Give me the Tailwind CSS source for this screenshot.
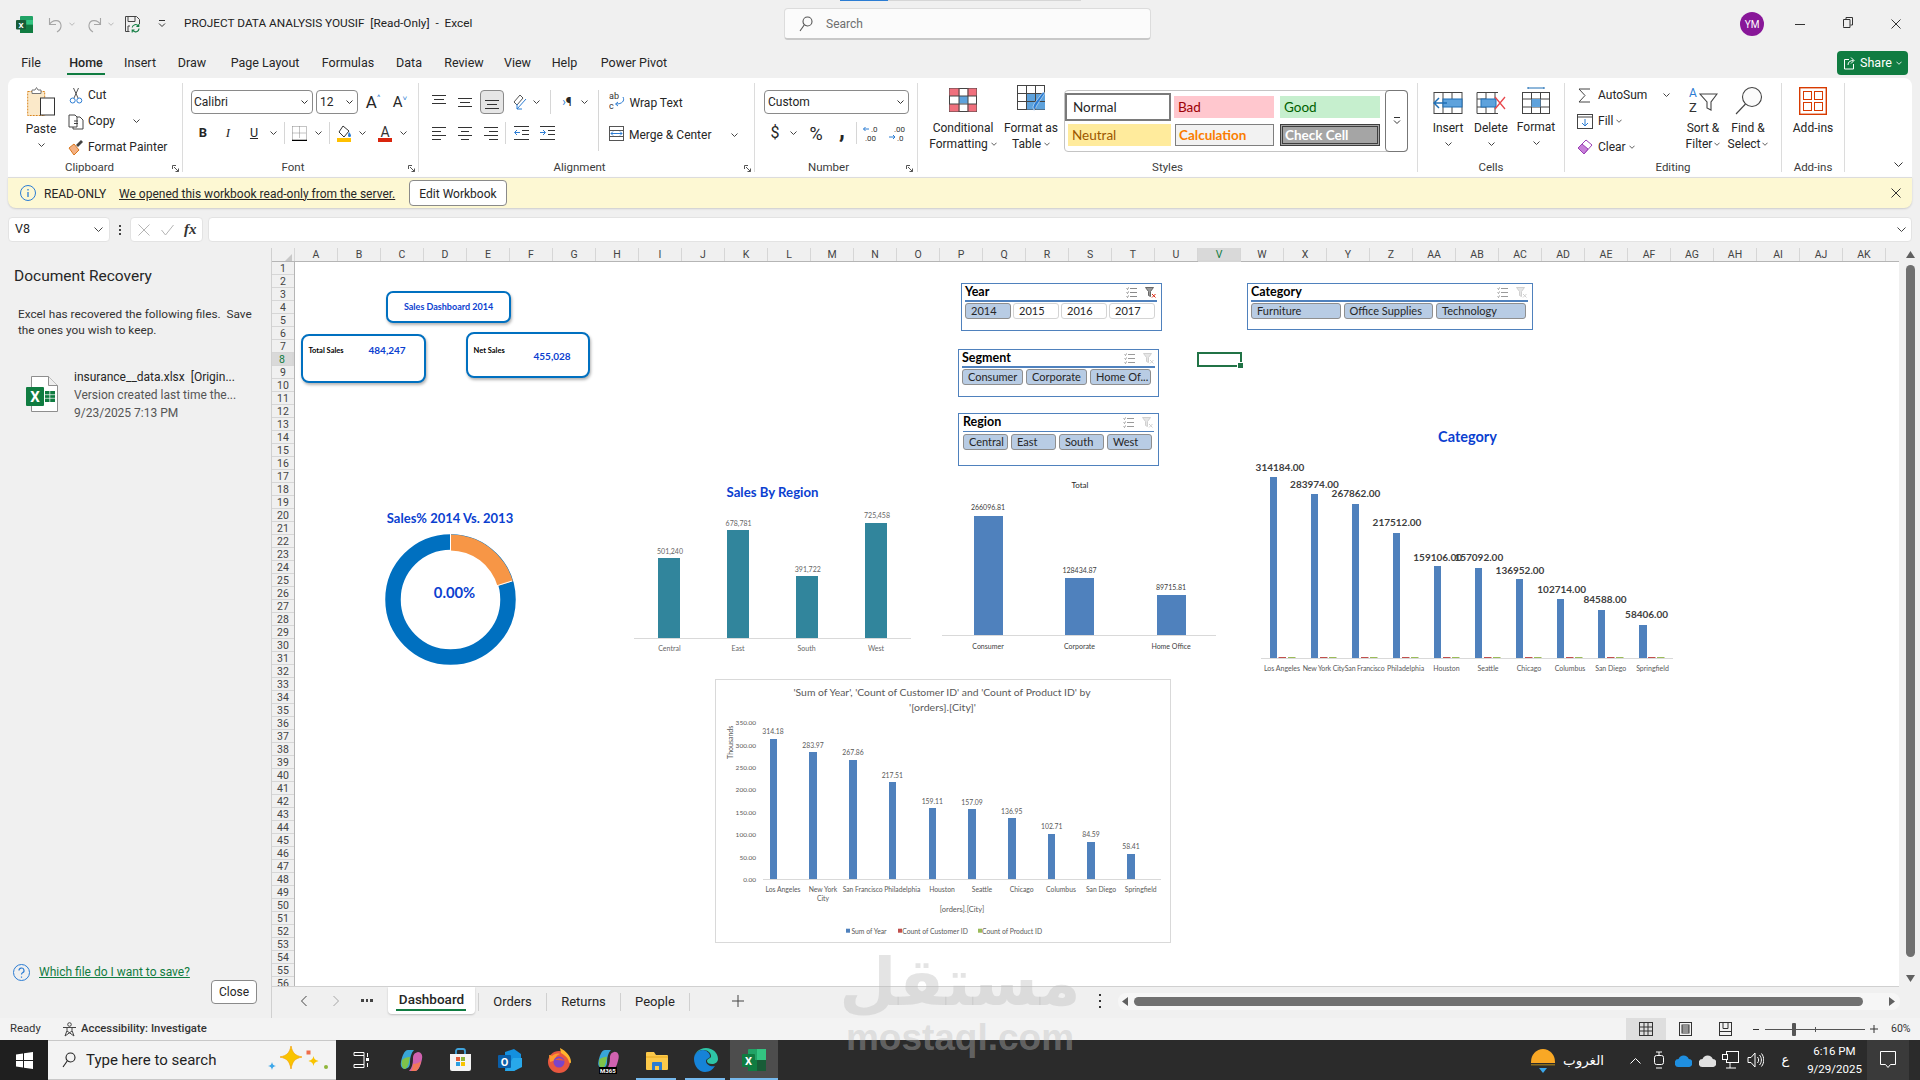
<!DOCTYPE html>
<html lang="en">
<head>
<meta charset="utf-8">
<title>PROJECT DATA ANALYSIS YOUSIF</title>
<script src="https://cdn.jsdelivr.net/npm/@tailwindcss/browser@4"></script>
</head>
<body class="bg-[#f0f0f0] overflow-hidden">
<div class="relative w-[1920px] h-[1080px] overflow-hidden flex flex-col bg-[#f0f0f0] font-['Roboto',sans-serif] text-[12px] text-[#262626]">

<!-- title bar -->
<div class="h-[51px] flex items-start pt-[8px] shrink-0">
  <div class="h-[32px] flex items-center pl-[16px]">
    <svg class="w-[17px] h-[17px]" viewBox="0 0 17 17"><rect x="4" width="13" height="17" rx="1" fill="#21a366"/><rect x="4" y="8.5" width="13" height="8.5" fill="#107c41"/><rect x="10.5" y="4" width="6.5" height="4.5" fill="#33c481"/><rect y="4" width="10" height="9.5" rx="1" fill="#185c37"/><text x="5" y="11.6" text-anchor="middle" font-size="8" font-weight="700" fill="#fff">X</text></svg>
    <svg class="w-[16px] h-[17px] ml-[14px]" viewBox="0 0 16 17" fill="none" stroke="#a6a6a6" stroke-width="1.1"><path d="M2.5 2v6.5H9M2.5 8.500C5 4 13 2.500 14 9c.4 3-1.500 5.500-4 7"/></svg>
    <svg class="w-[6px] h-[4px] ml-[6px]" viewBox="0 0 7 4" fill="none" stroke="#b0b0b0"><path d="M.5.500l3 3 3-3"/></svg>
    <svg class="w-[16px] h-[17px] ml-[12px]" viewBox="0 0 16 17" fill="none" stroke="#a6a6a6" stroke-width="1.1"><path d="M13.500 2v6.500H7M13.500 8.500C11 4 3 2.500 2 9c-.4 3 1.500 5.500 4 7"/></svg>
    <svg class="w-[6px] h-[4px] ml-[5px]" viewBox="0 0 7 4" fill="none" stroke="#b0b0b0"><path d="M.5.500l3 3 3-3"/></svg>
    <svg class="w-[16px] h-[17px] ml-[11px]" viewBox="0 0 16 17" fill="none"><path d="M.5.500h11l3 3V8M.5.500v15h4M3 .500v5h7v-5M3 15v-5h2" stroke="#444"/><path d="M14 12.500a3.500 3.500 0 0 1-6.400 1.800M7.200 11.500a3.500 3.500 0 0 1 6.200-1.600M13.800 8v2.400h-2.400M7.200 16.400v-2.400h2.400" stroke="#107c41" stroke-width="1.1"/></svg>
    <svg class="w-[10px] h-[8px] ml-[16px]" viewBox="0 0 10 8" fill="none" stroke="#333"><path d="M2 .500h6M2 3.500l3 3 3-3"/></svg>
  </div>
  <div class="h-[32px] flex items-center ml-[17px] w-[288px] whitespace-nowrap text-[#222] text-[11.8px]">PROJECT DATA ANALYSIS YOUSIF&nbsp; [Read-Only]&nbsp; -&nbsp; Excel</div>
  <div class="ml-[312px] w-[367px] h-[32px] bg-[#fbfbfb] border border-[#dcdcdc] border-b-[2px] border-b-[#c8c8c8] rounded-[4px] flex items-center pl-[14px] text-[#6e6e6e]">
    <svg class="w-[14px] h-[16px]" viewBox="0 0 14 16" fill="none" stroke="#555" stroke-width="1.1"><circle cx="8.500" cy="5.500" r="4.500"/><path d="M5.200 9L1 15"/></svg>
    <span class="ml-[13px]">Search</span>
  </div>
  <div class="ml-[589px] w-[24px] h-[32px] flex items-center justify-center"><span class="w-[24px] h-[24px] rounded-full bg-[#881798] text-white text-[10px] flex items-center justify-center">YM</span></div>
  <div class="ml-[31px] w-[10px] h-[32px] flex items-center"><span class="w-[10px] h-px bg-[#333]"></span></div>
  <svg class="ml-[38px] w-[10px] h-[32px]" viewBox="0 0 10 32" fill="none" stroke="#333"><path d="M.5 18.500v-7h6.500v8h-6.500zM3 11.500v-2h6.500v7.500H7.500"/></svg>
  <svg class="ml-[38px] w-[10px] h-[32px]" viewBox="0 0 10 32" fill="none" stroke="#333"><path d="M.5 11.500l9 9M9.500 11.500l-9 9"/></svg>
</div>

<!-- tabs -->
<div class="h-[27px] flex pl-[8px] shrink-0 text-[12.500px]">
  <div class="w-[46px] h-[25px] flex items-center justify-center">File</div>
  <div class="w-[64px] h-[25px] flex items-center justify-center relative font-medium">Home<span class="absolute left-[13px] right-[13px] bottom-[1px] h-[2.500px] bg-[#107c41]"></span></div>
  <div class="w-[44px] h-[25px] flex items-center justify-center">Insert</div>
  <div class="w-[60px] h-[25px] flex items-center justify-center">Draw</div>
  <div class="w-[86px] h-[25px] flex items-center justify-center">Page Layout</div>
  <div class="w-[80px] h-[25px] flex items-center justify-center">Formulas</div>
  <div class="w-[42px] h-[25px] flex items-center justify-center">Data</div>
  <div class="w-[68px] h-[25px] flex items-center justify-center">Review</div>
  <div class="w-[39px] h-[25px] flex items-center justify-center">View</div>
  <div class="w-[55px] h-[25px] flex items-center justify-center">Help</div>
  <div class="w-[84px] h-[25px] flex items-center justify-center">Power Pivot</div>
  <div class="ml-[1161px] w-[71px] h-[24px] bg-[#107c41] rounded-[4px] flex items-center justify-center gap-[4px] text-white text-[12.500px]">
    <svg class="w-[13px] h-[14px]" viewBox="0 0 13 14" fill="none" stroke="#fff"><path d="M6 3.500H1.500v9.500h9V8M5 9c0-3 2-4.500 5.500-4.500M8 1.500l3 3-3 3"/></svg>Share
    <svg class="w-[6px] h-[4px]" viewBox="0 0 7 4" fill="none" stroke="#fff"><path d="M.5.500l3 3 3-3"/></svg>
  </div>
</div>

<!-- ribbon -->
<div class="mx-[8px] h-[99px] bg-white rounded-t-[8px] flex shrink-0">
  <!-- Clipboard -->
  <div class="w-[174px] flex flex-col">
    <div class="h-[82px] flex">
      <div class="w-[60px] pl-[6px] flex flex-col items-center">
        <div class="h-[38px] flex items-end">
          <svg class="w-[28px] h-[29px]" viewBox="0 0 28 29" fill="none"><rect x=".7" y="4.500" width="17" height="24" fill="#fbe9c9" stroke="#d9861f" stroke-dasharray="2 1"/><path d="M5 4.500V3h3l1.500-2.500L11 3h3v3.500H5z" fill="#fff" stroke="#777"/><rect x="13.500" y="11" width="14" height="17" fill="#fff" stroke="#333"/></svg>
        </div>
        <div class="pt-[5px] leading-[16px]">Paste</div>
        <div class="h-[16px] flex items-center"><svg class="w-[7px] h-[4px]" viewBox="0 0 7 4" fill="none" stroke="#444"><path d="M.5.500l3 3 3-3"/></svg></div>
      </div>
      <div class="pt-[4px] flex flex-col">
        <div class="h-[26px] flex items-center"><svg class="w-[16px] h-[17px]" viewBox="0 0 16 17" fill="none" stroke="#555"><path d="M5.500 1l4.500 10M10.500 1L6 11"/><circle cx="4.700" cy="13.500" r="2.500" stroke="#2b7cd3"/><circle cx="11.300" cy="13.500" r="2.500" stroke="#2b7cd3"/></svg><span class="ml-[4px]">Cut</span></div>
        <div class="h-[26px] flex items-center"><svg class="w-[16px] h-[17px]" viewBox="0 0 16 17" fill="none" stroke="#444"><path d="M1 2h6l2 2v10H1zM5 14v2h10V7l-3-3H9M6 8h4M6 10.500h4"/></svg><span class="ml-[4px]">Copy</span><svg class="w-[7px] h-[4px] ml-[18px]" viewBox="0 0 7 4" fill="none" stroke="#444"><path d="M.5.500l3 3 3-3"/></svg></div>
        <div class="h-[26px] flex items-center"><svg class="w-[16px] h-[17px]" viewBox="0 0 16 17"><path d="M1 9l5-4 5 6-5 5z" fill="#f4b183" stroke="#d9771e"/><path d="M8 6l5-5 2 2-5 5z" fill="#444"/></svg><span class="ml-[4px] whitespace-nowrap">Format Painter</span></div>
      </div>
    </div>
    <div class="h-[16px] flex items-center relative text-[11.500px] text-[#3c3c3c]"><span class="w-[163px] text-center">Clipboard</span><svg class="w-[7px] h-[7px] ml-[1px]" viewBox="0 0 7 7" fill="none" stroke="#555"><path d="M.5 4V.5H4M2 2l4.500 4.500M6.500 3.500v3h-3"/></svg></div>
  </div>
  <div class="w-px bg-[#dcdcdc] my-[5px]"></div>

  <!-- Font -->
  <div class="w-[235px] flex flex-col">
    <div class="h-[82px] pt-[12px] flex flex-col">
      <div class="h-[24px] flex items-center">
        <div class="ml-[8px] w-[122px] h-[24px] border border-[#8a8a8a] rounded-[4px] flex items-center justify-between pl-[2px] pr-[4px]">Calibri<svg class="w-[7px] h-[4px]" viewBox="0 0 7 4" fill="none" stroke="#333"><path d="M.5.500l3 3 3-3"/></svg></div>
        <div class="ml-[3px] w-[42px] h-[24px] border border-[#8a8a8a] rounded-[4px] flex items-center justify-between pl-[3px] pr-[4px]">12<svg class="w-[7px] h-[4px]" viewBox="0 0 7 4" fill="none" stroke="#333"><path d="M.5.500l3 3 3-3"/></svg></div>
        <div class="ml-[5px] w-[20px] text-[17px] leading-[17px] flex justify-center"><span>A</span><span class="text-[8px] text-[#2b7cd3] leading-[8px]">^</span></div>
        <div class="ml-[7px] w-[20px] text-[15px] leading-[15px] flex justify-center"><span>A</span><span class="text-[8px] text-[#2b7cd3] leading-[8px]">˅</span></div>
      </div>
      <div class="mt-[8px] h-[22px] flex items-center">
        <span class="ml-[14px] w-[12px] text-center font-bold text-[13px]">B</span>
        <span class="ml-[15px] w-[8px] text-center italic text-[13px] font-['Liberation_Serif',serif]">I</span>
        <span class="ml-[17px] w-[10px] text-center underline text-[12.500px]">U</span>
        <svg class="ml-[10.500px] w-[7px] h-[4px]" viewBox="0 0 7 4" fill="none" stroke="#444"><path d="M.5.500l3 3 3-3"/></svg>
        <span class="ml-[7.500px] w-px h-[22px] bg-[#d6d6d6]"></span>
        <svg class="ml-[6.500px] w-[15px] h-[15px]" viewBox="0 0 15 15" fill="none"><path d="M.5.500h14v14M.5.500v14M7.500.500v12M.5 7h14" stroke="#888" stroke-dasharray="1 1"/><path d="M0 14.500h15" stroke="#000" stroke-width="1.500"/></svg>
        <svg class="ml-[8px] w-[7px] h-[4px]" viewBox="0 0 7 4" fill="none" stroke="#444"><path d="M.5.500l3 3 3-3"/></svg>
        <span class="ml-[7.500px] w-px h-[22px] bg-[#d6d6d6]"></span>
        <svg class="ml-[6px] w-[16px] h-[17px]" viewBox="0 0 16 17"><path d="M7 1l6 5-5 6-5-5z" fill="none" stroke="#333"/><path d="M13 7c1.500 2 2 3 2 3.500a1.500 1.500 0 0 1-3 0c0-.5.300-1.500 1-3.500z" fill="#2b7cd3"/><rect x="1" y="13" width="14" height="4" fill="#ffc000"/></svg>
        <svg class="ml-[6.500px] w-[7px] h-[4px]" viewBox="0 0 7 4" fill="none" stroke="#444"><path d="M.5.500l3 3 3-3"/></svg>
        <svg class="ml-[12.500px] w-[14px] h-[17px]" viewBox="0 0 14 17"><text x="7" y="11.500" text-anchor="middle" font-size="14" fill="#333">A</text><rect x="0" y="13" width="14" height="4" fill="#d9250d"/></svg>
        <svg class="ml-[7.500px] w-[7px] h-[4px]" viewBox="0 0 7 4" fill="none" stroke="#444"><path d="M.5.500l3 3 3-3"/></svg>
      </div>
    </div>
    <div class="h-[16px] flex items-center text-[11.500px] text-[#3c3c3c]"><span class="w-[220px] text-center">Font</span><svg class="w-[7px] h-[7px] ml-[5px]" viewBox="0 0 7 7" fill="none" stroke="#555"><path d="M.5 4V.5H4M2 2l4.500 4.500M6.500 3.500v3h-3"/></svg></div>
  </div>
  <div class="w-px bg-[#dcdcdc] my-[5px]"></div>

  <!-- Alignment -->
  <div class="w-[335px] flex flex-col">
    <div class="h-[82px] pt-[12px] flex">
      <div class="w-[179px] flex flex-col">
        <div class="h-[24px] flex items-center">
          <svg class="ml-[13px] w-[14px] h-[14px]" viewBox="0 0 14 14" stroke="#333"><path d="M0 .500h14M2 4.500h10M0 8.500h14"/></svg>
          <svg class="ml-[12px] w-[14px] h-[14px]" viewBox="0 0 14 14" stroke="#333"><path d="M0 3.500h14M2 7.500h10M0 11.500h14"/></svg>
          <div class="ml-[7.500px] w-[24px] h-[24px] bg-[#e6e6e6] border border-[#8a8a8a] rounded-[4px] flex items-center justify-center"><svg class="w-[14px] h-[14px]" viewBox="0 0 14 14" stroke="#333"><path d="M0 5.500h14M2 9.500h10M0 13.500h14"/></svg></div>
          <svg class="ml-[8.500px] w-[16px] h-[16px]" viewBox="0 0 16 16" fill="none"><path d="M2 8L8 1l3 3-6 7z" stroke="#555"/><path d="M14 5L5 15M5 15h5M5 15v-5" stroke="#2b7cd3"/></svg>
          <svg class="ml-[4.500px] w-[7px] h-[4px]" viewBox="0 0 7 4" fill="none" stroke="#444"><path d="M.5.500l3 3 3-3"/></svg>
          <span class="ml-[10.500px] w-px h-[24px] bg-[#d6d6d6]"></span>
          <span class="ml-[9px] w-[14px] text-center text-[12px]"><span class="text-[#2b7cd3]">›</span>¶</span>
          <svg class="ml-[7px] w-[7px] h-[4px]" viewBox="0 0 7 4" fill="none" stroke="#444"><path d="M.5.500l3 3 3-3"/></svg>
        </div>
        <div class="mt-[8px] h-[22px] flex items-center">
          <svg class="ml-[13px] w-[14px] h-[14px]" viewBox="0 0 14 14" stroke="#333"><path d="M0 1.500h14M0 5.500h9M0 9.500h14M0 13.500h9"/></svg>
          <svg class="ml-[12px] w-[14px] h-[14px]" viewBox="0 0 14 14" stroke="#333"><path d="M0 1.500h14M3 5.500h8M0 9.500h14M3 13.500h8"/></svg>
          <svg class="ml-[12px] w-[14px] h-[14px]" viewBox="0 0 14 14" stroke="#333"><path d="M0 1.500h14M5 5.500h9M0 9.500h14M5 13.500h9"/></svg>
          <span class="ml-[7px] w-px h-[22px] bg-[#d6d6d6]"></span>
          <svg class="ml-[7.500px] w-[15px] h-[14px]" viewBox="0 0 15 14" fill="none"><path d="M0 .500h15M8 4.500h7M8 8.500h7M0 13.500h15" stroke="#333"/><path d="M6 6.500H1M3 4L.5 6.500 3 9" stroke="#2b7cd3"/></svg>
          <svg class="ml-[11px] w-[15px] h-[14px]" viewBox="0 0 15 14" fill="none"><path d="M0 .500h15M8 4.500h7M8 8.500h7M0 13.500h15" stroke="#333"/><path d="M0 6.500h5M3 4l2.500 2.500L3 9" stroke="#2b7cd3"/></svg>
        </div>
      </div>
      <span class="w-px h-[61px] bg-[#d6d6d6]"></span>
      <div class="flex flex-col pl-[10px]">
        <div class="h-[24px] flex items-center"><svg class="w-[16px] h-[22px]" viewBox="0 0 16 22" fill="none"><text x="0" y="8" font-size="9" fill="#333">ab</text><text x="0" y="18" font-size="9" fill="#333">c</text><path d="M14 6c2 4-1 7-7 7M9 11l-2.500 2L9 15" stroke="#2b7cd3"/></svg><span class="ml-[4.500px] pt-[2px] whitespace-nowrap">Wrap Text</span></div>
        <div class="mt-[8px] h-[22px] flex items-center"><svg class="w-[15px] h-[15px]" viewBox="0 0 15 15" fill="none"><rect x=".5" y=".5" width="14" height="14" stroke="#555"/><path d="M.5 4.500h14M.5 10.500h14" stroke="#555"/><path d="M2 7.500h11M4 5.500l-2 2 2 2M11 5.500l2 2-2 2" stroke="#2b7cd3"/></svg><span class="ml-[5px] pt-[3px] whitespace-nowrap w-[90px]">Merge &amp; Center</span><svg class="ml-[12px] mt-[3px] w-[7px] h-[4px]" viewBox="0 0 7 4" fill="none" stroke="#444"><path d="M.5.500l3 3 3-3"/></svg></div>
      </div>
    </div>
    <div class="h-[16px] flex items-center text-[11.500px] text-[#3c3c3c]"><span class="w-[321px] text-center">Alignment</span><svg class="w-[7px] h-[7px] ml-[4px]" viewBox="0 0 7 7" fill="none" stroke="#555"><path d="M.5 4V.5H4M2 2l4.500 4.500M6.500 3.500v3h-3"/></svg></div>
  </div>
  <div class="w-px bg-[#dcdcdc] my-[5px]"></div>

  <!-- Number -->
  <div class="w-[162px] flex flex-col">
    <div class="h-[82px] pt-[12px] flex flex-col">
      <div class="ml-[9px] w-[145px] h-[24px] border border-[#8a8a8a] rounded-[4px] flex items-center justify-between pl-[3px] pr-[4px]">Custom<svg class="w-[7px] h-[4px]" viewBox="0 0 7 4" fill="none" stroke="#333"><path d="M.5.500l3 3 3-3"/></svg></div>
      <div class="mt-[8px] h-[22px] flex items-center">
        <span class="ml-[15px] w-[10px] text-center text-[16px]">$</span>
        <svg class="ml-[10px] w-[7px] h-[4px]" viewBox="0 0 7 4" fill="none" stroke="#444"><path d="M.5.500l3 3 3-3"/></svg>
        <span class="ml-[9px] w-[20px] text-center text-[18px]">%</span>
        <span class="ml-[13px] w-[6px] text-center text-[24px] font-bold leading-[12px] -mt-[6px]">,</span>
        <span class="ml-[11px] w-px h-[22px] bg-[#d6d6d6]"></span>
        <svg class="ml-[5px] w-[18px] h-[17px]" viewBox="0 0 18 17" fill="none"><path d="M7 4H1.500M3.500 2l-2 2 2 2" stroke="#2b7cd3"/><text x="9" y="7" font-size="8" fill="#333">.0</text><text x="3" y="15.500" font-size="8" fill="#333">.00</text></svg>
        <svg class="ml-[7.500px] w-[18px] h-[17px]" viewBox="0 0 18 17" fill="none"><text x="6" y="7" font-size="8" fill="#333">.00</text><path d="M1 12h6M5 10l2 2-2 2" stroke="#2b7cd3"/><text x="9" y="15.500" font-size="8" fill="#333">.0</text></svg>
      </div>
    </div>
    <div class="h-[16px] flex items-center text-[11.500px] text-[#3c3c3c]"><span class="w-[147px] text-center">Number</span><svg class="w-[7px] h-[7px] ml-[4px]" viewBox="0 0 7 7" fill="none" stroke="#555"><path d="M.5 4V.5H4M2 2l4.500 4.500M6.500 3.500v3h-3"/></svg></div>
  </div>
  <div class="w-px bg-[#dcdcdc] my-[5px]"></div>

  <!-- Styles -->
  <div class="w-[499px] flex flex-col">
    <div class="h-[82px] flex">
      <div class="w-[90px] flex flex-col items-center">
        <div class="h-[38px] flex items-end pb-[4px]"><svg class="w-[28px] h-[24px]" viewBox="0 0 28 24"><rect x=".5" y=".5" width="27" height="23" fill="#fff" stroke="#444"/><rect x=".5" y=".5" width="10" height="7.500" fill="#f0707d"/><rect x="10" y="8" width="9" height="7.500" fill="#5ea2dc"/><rect x=".5" y="16" width="10" height="7.500" fill="#f0707d"/><rect x="18.500" y="16" width="9" height="7.500" fill="#f0707d"/><rect x="18.500" y=".5" width="9" height="7.500" fill="#f0707d"/><path d="M10 0v24M19 0v24M0 8h28M0 16h28" stroke="#444"/></svg></div>
        <div class="pt-[4px] leading-[16px]">Conditional</div>
        <div class="leading-[16px] flex items-center gap-[3px]">Formatting<svg class="w-[6px] h-[4px]" viewBox="0 0 7 4" fill="none" stroke="#444"><path d="M.5.500l3 3 3-3"/></svg></div>
      </div>
      <div class="w-[46px] flex flex-col items-center">
        <div class="h-[38px] flex items-end pb-[4px]"><svg class="w-[29px] h-[27px]" viewBox="0 0 29 27"><rect x=".5" y=".5" width="27" height="24" fill="#fff" stroke="#444"/><rect x="10" y="8.500" width="18" height="16" fill="#5ea2dc"/><path d="M9.500 0v25M18.500 0v25M0 8.500h28M0 16.500h28" stroke="#444"/><path d="M28 8l-8 12-3 6-1-4 1-3 9-12z" fill="#2b7cd3" stroke="#fff" stroke-width=".5"/></svg></div>
        <div class="pt-[4px] leading-[16px] whitespace-nowrap">Format as</div>
        <div class="leading-[16px] flex items-center gap-[3px]">Table<svg class="w-[6px] h-[4px]" viewBox="0 0 7 4" fill="none" stroke="#444"><path d="M.5.500l3 3 3-3"/></svg></div>
      </div>
      <div class="ml-[10px] mt-[12px] w-[344px] h-[62px] border border-[#c4c4c4] rounded-[4px] flex text-[13.500px]">
        <div class="w-[320px] grid grid-cols-[106px_100px_103px] gap-x-[3px] grid-rows-[32px_24px]">
          <div class="self-center h-[28px] ml-0 border-[2px] border-[#7a7a7a] bg-white flex items-center pl-[6px] font-['Lato',sans-serif]">Normal</div>
          <div class="self-center h-[22px] bg-[#ffc7ce] text-[#9c0006] flex items-center pl-[4px] font-['Lato',sans-serif]">Bad</div>
          <div class="self-center h-[22px] ml-[3px] bg-[#c6efce] text-[#006100] flex items-center pl-[4px] font-['Lato',sans-serif]">Good</div>
          <div class="self-center h-[22px] ml-[3px] bg-[#ffeb9c] text-[#9c5700] flex items-center pl-[4px] font-['Lato',sans-serif]">Neutral</div>
          <div class="self-center h-[22px] ml-px bg-[#f2f2f2] border border-[#7f7f7f] text-[#fa7d00] font-bold flex items-center pl-[3px] font-['Lato',sans-serif]">Calculation</div>
          <div class="self-center h-[22px] ml-[3px] bg-[#a5a5a5] border-[3px] border-double border-[#3f3f3f] text-white font-bold flex items-center pl-[2px] font-['Lato',sans-serif]">Check Cell</div>
        </div>
        <div class="ml-auto w-[23px] border border-[#777] rounded-[4px] -my-px -mr-px flex items-center justify-center"><svg class="w-[8px] h-[8px]" viewBox="0 0 8 8" fill="none" stroke="#333"><path d="M1 .500h6M1 3.500l3 3 3-3"/></svg></div>
      </div>
    </div>
    <div class="h-[16px] flex items-center justify-center text-[11.500px] text-[#3c3c3c]"><span class="ml-[0px]">Styles</span></div>
  </div>
  <div class="w-px bg-[#dcdcdc] my-[5px]"></div>

  <!-- Cells -->
  <div class="w-[146px] flex flex-col">
    <div class="h-[82px] flex pl-[6px]">
      <div class="w-[48px] flex flex-col items-center">
        <div class="h-[36px] flex items-end"><svg class="w-[30px] h-[22px]" viewBox="0 0 30 22" fill="none"><rect x="1" y=".5" width="28" height="21" fill="#fff" stroke="#444"/><path d="M10 0v22M19 0v22" stroke="#444"/><rect x="10" y="7" width="19" height="8" fill="#5ea2dc" stroke="#1f6fb5"/><path d="M14 11H1M6 6l-5 5 5 5" stroke="#1f6fb5" stroke-width="1.500"/></svg></div>
        <div class="pt-[6px] leading-[16px]">Insert</div>
        <div class="h-[16px] flex items-center"><svg class="w-[7px] h-[4px]" viewBox="0 0 7 4" fill="none" stroke="#444"><path d="M.5.500l3 3 3-3"/></svg></div>
      </div>
      <div class="w-[38px] flex flex-col items-center">
        <div class="h-[36px] flex items-end"><svg class="w-[30px] h-[22px]" viewBox="0 0 30 22" fill="none"><path d="M22 .500H1v21h21M1 7h9M1 15h9M10 0v7M10 15v7M19 0v7M19 15v7" stroke="#444"/><rect x="5" y="7" width="15" height="8" fill="#5ea2dc" stroke="#1f6fb5"/><path d="M19 5l10 12M29 5L19 17" stroke="#e8474c" stroke-width="1.300"/></svg></div>
        <div class="pt-[6px] leading-[16px]">Delete</div>
        <div class="h-[16px] flex items-center"><svg class="w-[7px] h-[4px]" viewBox="0 0 7 4" fill="none" stroke="#444"><path d="M.5.500l3 3 3-3"/></svg></div>
      </div>
      <div class="w-[52px] flex flex-col items-center">
        <div class="h-[36px] flex flex-col justify-end items-center"><svg class="w-[28px] h-[27px]" viewBox="0 0 28 27" fill="none"><path d="M6 1h16M6 0v2M22 0v2" stroke="#1f6fb5"/><rect x=".5" y="5.500" width="27" height="21" fill="#fff" stroke="#444"/><path d="M9.500 5v22M18.500 5v22M0 12h28M0 20h28" stroke="#444"/><rect x="9.500" y="12" width="9" height="8" fill="#5ea2dc"/></svg></div>
        <div class="pt-[5px] leading-[16px]">Format</div>
        <div class="h-[16px] flex items-center"><svg class="w-[7px] h-[4px]" viewBox="0 0 7 4" fill="none" stroke="#444"><path d="M.5.500l3 3 3-3"/></svg></div>
      </div>
    </div>
    <div class="h-[16px] flex items-center justify-center text-[11.500px] text-[#3c3c3c]">Cells</div>
  </div>
  <div class="w-px bg-[#dcdcdc] my-[5px]"></div>

  <!-- Editing -->
  <div class="w-[216px] flex flex-col">
    <div class="h-[82px] flex">
      <div class="w-[116px] pt-[4px] pl-[12px] flex flex-col">
        <div class="h-[26px] flex items-center"><svg class="w-[16px] h-[15px]" viewBox="0 0 16 15" fill="none" stroke="#444"><path d="M13 1H2l6 6.500L2 14h11"/></svg><span class="ml-[5px] w-[62px]">AutoSum</span><svg class="ml-[3px] w-[7px] h-[4px]" viewBox="0 0 7 4" fill="none" stroke="#444"><path d="M.5.500l3 3 3-3"/></svg></div>
        <div class="h-[26px] flex items-center"><svg class="w-[16px] h-[15px]" viewBox="0 0 16 15" fill="none"><rect x=".5" y=".5" width="15" height="14" stroke="#444"/><path d="M0 3h16" stroke="#444"/><path d="M8 5v7M5 9l3 3 3-3" stroke="#2b7cd3"/></svg><span class="ml-[5px]">Fill</span><svg class="ml-[3px] w-[6px] h-[4px]" viewBox="0 0 7 4" fill="none" stroke="#444"><path d="M.5.500l3 3 3-3"/></svg></div>
        <div class="h-[26px] flex items-center"><svg class="w-[16px] h-[16px]" viewBox="0 0 16 16" fill="none"><path d="M1 9l8-8 6 5-8 9z" stroke="#9b3fb5" fill="#fff"/><path d="M1 9l4-4 6 5-4 5z" fill="#c77fd9" stroke="#9b3fb5"/></svg><span class="ml-[5px]">Clear</span><svg class="ml-[3px] w-[6px] h-[4px]" viewBox="0 0 7 4" fill="none" stroke="#444"><path d="M.5.500l3 3 3-3"/></svg></div>
      </div>
      <div class="w-[44px] flex flex-col items-center">
        <div class="h-[38px] flex items-end pb-px"><svg class="w-[30px] h-[29px]" viewBox="0 0 30 29" fill="none"><text x="1" y="11" font-size="12" fill="#2b7cd3">A</text><text x="1" y="26" font-size="13" fill="#333">Z</text><path d="M12 8h17l-6 8v8l-4 -2v-6z" stroke="#444" stroke-width="1.100"/></svg></div>
        <div class="pt-[4px] leading-[16px] whitespace-nowrap">Sort &amp;</div>
        <div class="leading-[16px] flex items-center gap-[2px] whitespace-nowrap">Filter<svg class="w-[6px] h-[4px]" viewBox="0 0 7 4" fill="none" stroke="#444"><path d="M.5.500l3 3 3-3"/></svg></div>
      </div>
      <div class="w-[46px] flex flex-col items-center">
        <div class="h-[38px] flex items-end pb-px"><svg class="w-[30px] h-[29px]" viewBox="0 0 30 29" fill="none" stroke="#444" stroke-width="1.100"><circle cx="19" cy="11" r="9.500" fill="#fbfbfb"/><path d="M12.500 18L3 28"/></svg></div>
        <div class="pt-[4px] leading-[16px] whitespace-nowrap">Find &amp;</div>
        <div class="leading-[16px] flex items-center gap-[2px] whitespace-nowrap">Select<svg class="w-[6px] h-[4px]" viewBox="0 0 7 4" fill="none" stroke="#444"><path d="M.5.500l3 3 3-3"/></svg></div>
      </div>
    </div>
    <div class="h-[16px] flex items-center justify-center text-[11.500px] text-[#3c3c3c]">Editing</div>
  </div>
  <div class="w-px bg-[#dcdcdc] my-[5px]"></div>

  <!-- Add-ins -->
  <div class="w-[62px] flex flex-col">
    <div class="h-[82px] flex flex-col items-center">
      <div class="h-[38px] flex items-end pb-px"><svg class="w-[28px] h-[28px]" viewBox="0 0 28 28" fill="none" stroke="#d83b01"><rect x=".7" y=".7" width="26.600" height="26.600" stroke-width="1.400"/><rect x="4.500" y="4.500" width="8" height="8"/><rect x="15.500" y="4.500" width="8" height="8"/><rect x="4.500" y="15.500" width="8" height="8"/><rect x="15.500" y="15.500" width="8" height="8"/></svg></div>
      <div class="pt-[4px] leading-[16px]">Add-ins</div>
    </div>
    <div class="h-[16px] flex items-center justify-center text-[11.500px] text-[#3c3c3c]">Add-ins</div>
  </div>
  <div class="w-px bg-[#dcdcdc] my-[5px]"></div>
  <div class="flex-1 flex items-end pb-[10px] pl-[49px]"><svg class="w-[9px] h-[5px]" viewBox="0 0 9 5" fill="none" stroke="#333"><path d="M.5.500l4 4 4-4"/></svg></div>
</div>

<!-- message bar -->
<div class="mx-[8px] h-[31px] bg-[#fdf8d3] border-t border-[#dcdcdc] rounded-b-[8px] shadow-[0_1px_2px_rgba(0,0,0,0.15)] flex items-center pl-[12px] shrink-0">
  <svg class="w-[16px] h-[16px]" viewBox="0 0 16 16" fill="none" stroke="#2b7cd3"><circle cx="8" cy="8" r="7.500"/><path d="M8 7v5M8 4v1.500" stroke-width="1.300"/></svg>
  <span class="ml-[8px] w-[67px] pt-px whitespace-nowrap">READ-ONLY</span>
  <span class="ml-[8px] w-[278px] pt-px underline whitespace-nowrap">We opened this workbook read-only from the server.</span>
  <button class="ml-[12px] w-[98px] h-[26px] pt-px bg-white border border-[#8a8a8a] rounded-[4px]">Edit Workbook</button>
  <svg class="ml-auto mr-[11px] w-[10px] h-[10px]" viewBox="0 0 10 10" fill="none" stroke="#333"><path d="M.5.500l9 9M9.500.500l-9 9"/></svg>
</div>

<!-- formula bar -->
<div class="mt-[9px] mb-[6px] mx-[8px] h-[25px] flex shrink-0">
  <div class="w-[102px] bg-white border border-[#e3e3e3] rounded-[4px] flex items-center justify-between pl-[6px] pr-[6px] text-[12.500px]">V8<svg class="w-[9px] h-[5px]" viewBox="0 0 9 5" fill="none" stroke="#444"><path d="M.5.500l4 4 4-4"/></svg></div>
  <div class="w-[20px] flex flex-col items-center justify-center gap-[2px]"><span class="w-[2px] h-[2px] bg-[#444]"></span><span class="w-[2px] h-[2px] bg-[#444]"></span><span class="w-[2px] h-[2px] bg-[#444]"></span></div>
  <div class="w-[73px] bg-white border border-[#e3e3e3] rounded-[4px] flex items-center pl-[7px]">
    <svg class="w-[12px] h-[12px]" viewBox="0 0 12 12" fill="none" stroke="#b5b5b5"><path d="M.5.500l11 11M11.500.500l-11 11"/></svg>
    <svg class="ml-[11px] w-[13px] h-[12px]" viewBox="0 0 13 12" fill="none" stroke="#b5b5b5"><path d="M.5 6l4 5 8-10"/></svg>
    <span class="ml-[10px] italic font-['Liberation_Serif',serif] text-[15px] text-[#333] font-bold">fx</span>
  </div>
  <div class="ml-[5px] flex-1 bg-white border border-[#e3e3e3] rounded-[4px] flex items-center justify-end pr-[5px]"><svg class="w-[9px] h-[5px]" viewBox="0 0 9 5" fill="none" stroke="#444"><path d="M.5.500l4 4 4-4"/></svg></div>
</div>

<!-- main -->
<div class="h-[770px] flex shrink-0">
  <!-- recovery pane -->
  <div class="w-[272px] flex flex-col border-r border-[#d0d0d0]">
    <div class="pl-[14px] pt-[18px] text-[15.500px] leading-[20px] text-[#262626]">Document Recovery</div>
    <div class="pl-[18px] pt-[20px] w-[262px] text-[11.800px] leading-[16px] text-[#333]">Excel has recovered the following files.&nbsp; Save the ones you wish to keep.</div>
    <div class="mt-[28px] flex">
      <svg class="ml-[26px] mt-[10px] w-[32px] h-[36px]" viewBox="0 0 32 36"><path d="M5.500.500h17l9 9v26h-26z" fill="#fff" stroke="#8e8e8e"/><path d="M22.500.500v9h9" fill="#eee" stroke="#8e8e8e"/><rect x="19" y="15" width="10" height="11" fill="#107c41"/><path d="M19 18.700h10M19 22.300h10M23.800 15v11" stroke="#fff" stroke-width=".7"/><rect y="11" width="18" height="19" rx="1" fill="#107c41"/><text x="9" y="25.500" text-anchor="middle" font-size="15" font-weight="700" fill="#fff">X</text></svg>
      <div class="ml-[16px] mt-[2px] flex flex-col leading-[18px] whitespace-nowrap"><span>insurance__data.xlsx&nbsp; [Origin...</span><span class="text-[#555]">Version created last time the...</span><span class="text-[#555]">9/23/2025 7:13 PM</span></div>
    </div>
    <div class="mt-auto -mb-[2px] flex items-center pl-[13px] h-[20px]">
      <svg class="w-[17px] h-[17px]" viewBox="0 0 17 17" fill="none" stroke="#2b7cd3"><circle cx="8.500" cy="8.500" r="8"/><path d="M6 6.500a2.500 2.500 0 1 1 3.500 2.300c-.7.400-1 .8-1 1.700M8.500 12.500v1.300" stroke-width="1.200"/></svg>
      <span class="ml-[9px] underline text-[#107c41]">Which file do I want to save?</span>
    </div>
    <div class="h-[24px] mb-[14px] flex justify-end pr-[14px]"><button class="w-[46px] h-[24px] bg-white border border-[#8a8a8a] rounded-[4px]">Close</button></div>
  </div>

  <!-- workbook column -->
  <div class="w-[1648px] flex flex-col">
    <div class="h-[739px] flex">
      <div class="w-[1627px] flex flex-col">
        <!-- column headers -->
        <div class="h-[14px] flex border-b border-[#b5b5b5] text-[10.500px] leading-[14px] text-[#444] *:w-[43px] *:text-center *:border-r *:border-[#d6d6d6]">
          <span class="w-[23px]! flex items-end justify-end pr-[2px]"><svg class="w-[7px] h-[7px]" viewBox="0 0 7 7"><path d="M7 0v7H0z" fill="#c8c8c8"/></svg></span>
          <span>A</span><span>B</span><span>C</span><span>D</span><span>E</span><span>F</span><span>G</span><span>H</span><span>I</span><span>J</span><span>K</span><span>L</span><span>M</span><span>N</span><span>O</span><span>P</span><span>Q</span><span>R</span><span>S</span><span>T</span><span>U</span><span class="bg-[#d9d9d9] text-[#107c41] border-b-[2px] border-b-[#107c41] -mb-px">V</span><span>W</span><span>X</span><span>Y</span><span>Z</span><span>AA</span><span>AB</span><span>AC</span><span>AD</span><span>AE</span><span>AF</span><span>AG</span><span>AH</span><span>AI</span><span>AJ</span><span>AK</span>
        </div>
        <div class="h-[725px] flex border-b border-[#d0d0d0]">
          <!-- row headers -->
          <div class="w-[23px] h-full overflow-hidden flex flex-col shrink-0 text-[10.500px] leading-[13px] text-[#444] *:h-[13px] *:shrink-0 *:text-center *:border-b *:border-[#d6d6d6] border-r border-[#b5b5b5]">
            <span>1</span><span>2</span><span>3</span><span>4</span><span>5</span><span>6</span><span>7</span><span class="bg-[#d9d9d9] text-[#107c41] border-r-[2px] border-r-[#107c41]">8</span><span>9</span><span>10</span><span>11</span><span>12</span><span>13</span><span>14</span><span>15</span><span>16</span><span>17</span><span>18</span><span>19</span><span>20</span><span>21</span><span>22</span><span>23</span><span>24</span><span>25</span><span>26</span><span>27</span><span>28</span><span>29</span><span>30</span><span>31</span><span>32</span><span>33</span><span>34</span><span>35</span><span>36</span><span>37</span><span>38</span><span>39</span><span>40</span><span>41</span><span>42</span><span>43</span><span>44</span><span>45</span><span>46</span><span>47</span><span>48</span><span>49</span><span>50</span><span>51</span><span>52</span><span>53</span><span>54</span><span>55</span><span>56</span>
          </div>
          <!-- sheet canvas -->
          <div class="relative w-[1604px] h-full bg-white overflow-hidden font-['Lato',sans-serif]">

            <!-- charts -->
            <svg class="absolute left-0 top-0 w-[1604px] h-[724px]" viewBox="295 262 1604 724" font-family="Lato, sans-serif">
              <!-- donut -->
              <circle cx="450.500" cy="599.500" r="57.500" fill="none" stroke="#0070c0" stroke-width="15.500"/>
              <path d="M450.500 534.500A65 65 0 0 1 512.900 581.300L497.500 585.900A49 49 0 0 0 450.500 550.500z" fill="#f79646"/>
              <path d="M450.500 534v17M512 581l-16 5" stroke="#fff" stroke-width="1"/>
              <text x="450" y="518" text-anchor="middle" dominant-baseline="central" font-size="13" font-weight="700" fill="#0b3fd0">Sales% 2014 Vs. 2013</text>
              <text x="454.500" y="592" text-anchor="middle" dominant-baseline="central" font-size="14.800" font-weight="700" fill="#0b3fd0">0.00%</text>

              <!-- sales by region -->
              <text x="772.500" y="492" text-anchor="middle" dominant-baseline="central" font-size="13.200" font-weight="700" fill="#0b3fd0">Sales By Region</text>
              <g fill="#31859c"><rect x="658" y="558" width="22" height="80"/><rect x="727" y="530" width="22" height="108"/><rect x="796" y="576" width="22" height="62"/><rect x="865" y="523" width="22" height="115"/></g>
              <path d="M634 638.500h277" stroke="#d9d9d9"/>
              <g font-size="7" fill="#666" text-anchor="middle" dominant-baseline="central">
                <text x="670" y="550.700">501,240</text><text x="738.600" y="522.700">678,781</text><text x="807.800" y="568.700">391,722</text><text x="877" y="514.700">725,458</text>
                <text x="669.400" y="647.700">Central</text><text x="738" y="647.700">East</text><text x="806.600" y="647.700">South</text><text x="876" y="647.700">West</text>
              </g>

              <!-- total -->
              <text x="1080" y="485" text-anchor="middle" dominant-baseline="central" font-size="8" fill="#262626">Total</text>
              <g fill="#4f81bd"><rect x="974" y="516" width="29" height="119"/><rect x="1065" y="578" width="29" height="57"/><rect x="1157" y="595" width="29" height="40"/></g>
              <path d="M942 635.500h274" stroke="#d9d9d9"/>
              <g font-size="7" fill="#404040" text-anchor="middle" dominant-baseline="central">
                <text x="988" y="507.300">266096.81</text><text x="1079.500" y="569.700">128434.87</text><text x="1171" y="587.300">89715.81</text>
                <text x="988" y="645.700">Consumer</text><text x="1079.500" y="645.700">Corporate</text><text x="1171" y="645.700">Home Office</text>
              </g>

              <!-- category -->
              <text x="1467.500" y="436.700" text-anchor="middle" dominant-baseline="central" font-size="14.500" font-weight="700" fill="#0b3fd0">Category</text>
              <g fill="#4f81bd"><rect x="1270" y="477" width="7" height="181"/><rect x="1311" y="494" width="7" height="164"/><rect x="1352" y="504" width="7" height="154"/><rect x="1393" y="533" width="7" height="125"/><rect x="1434" y="566" width="7" height="92"/><rect x="1475" y="568" width="7" height="90"/><rect x="1516" y="579" width="7" height="79"/><rect x="1557" y="599" width="7" height="59"/><rect x="1598" y="610" width="7" height="48"/><rect x="1639" y="625" width="8" height="33"/></g>
              <g fill="#c0504d"><rect x="1278.500" y="657" width="7.500" height="1"/><rect x="1320" y="657" width="7.500" height="1"/><rect x="1361" y="657" width="7.500" height="1"/><rect x="1402" y="657" width="7.500" height="1"/><rect x="1443" y="657" width="7.500" height="1"/><rect x="1484" y="657" width="7.500" height="1"/><rect x="1525" y="657" width="7.500" height="1"/><rect x="1566" y="657" width="7.500" height="1"/><rect x="1607" y="657" width="7.500" height="1"/><rect x="1648" y="657" width="7.500" height="1"/></g>
              <g fill="#9bbb59"><rect x="1288" y="657" width="7.500" height="1"/><rect x="1329" y="657" width="7.500" height="1"/><rect x="1370" y="657" width="7.500" height="1"/><rect x="1411" y="657" width="7.500" height="1"/><rect x="1452" y="657" width="7.500" height="1"/><rect x="1493" y="657" width="7.500" height="1"/><rect x="1534" y="657" width="7.500" height="1"/><rect x="1575" y="657" width="7.500" height="1"/><rect x="1616" y="657" width="7.500" height="1"/><rect x="1657" y="657" width="7.500" height="1"/></g>
              <path d="M1261 658.500h412" stroke="#d9d9d9"/>
              <g font-size="10" font-weight="700" fill="#404040" text-anchor="middle" dominant-baseline="central">
                <text x="1280" y="466.700">314184.00</text><text x="1314.500" y="484">283974.00</text><text x="1356" y="493">267862.00</text><text x="1397" y="522">217512.00</text><text x="1437.700" y="556.700">159106.00</text><text x="1478.800" y="557">157092.00</text><text x="1520" y="569.700">136952.00</text><text x="1561.700" y="589.300">102714.00</text><text x="1605" y="599.300">84588.00</text><text x="1646.600" y="614.300">58406.00</text>
              </g>
              <g font-size="7" fill="#595959" text-anchor="middle" dominant-baseline="central">
                <text x="1282" y="667.700">Los Angeles</text><text x="1323.700" y="667.700" textLength="42">New York City</text><text x="1364.700" y="667.700" textLength="40">San Francisco</text><text x="1405.600" y="667.700">Philadelphia</text><text x="1446.500" y="667.700">Houston</text><text x="1488" y="667.700">Seattle</text><text x="1529" y="667.700">Chicago</text><text x="1570" y="667.700">Columbus</text><text x="1610.700" y="667.700">San Diego</text><text x="1652.500" y="667.700">Springfield</text>
              </g>

              <!-- big chart -->
              <rect x="715.500" y="679.500" width="455" height="263" fill="#fff" stroke="#d9d9d9"/>
              <g font-size="10" fill="#595959" text-anchor="middle" dominant-baseline="central">
                <text x="942" y="692" textLength="297" lengthAdjust="spacingAndGlyphs">'Sum of Year', 'Count of Customer ID' and 'Count of Product ID' by</text>
                <text x="942.500" y="706.700" textLength="67" lengthAdjust="spacingAndGlyphs">'[orders].[City]'</text>
              </g>
              <g font-size="6.500" fill="#595959" text-anchor="end" dominant-baseline="central">
                <text x="756" y="722.700">350.00</text><text x="756" y="745">300.00</text><text x="756" y="767.400">250.00</text><text x="756" y="789.800">200.00</text><text x="756" y="812.200">150.00</text><text x="756" y="834.600">100.00</text><text x="756" y="857">50.00</text><text x="756" y="879.300">0.00</text>
              </g>
              <text transform="translate(730 742.300) rotate(-90)" text-anchor="middle" dominant-baseline="central" font-size="7" fill="#595959">Thousands</text>
              <g fill="#4f81bd"><rect x="770" y="739" width="7" height="140"/><rect x="809" y="752" width="8" height="127"/><rect x="849" y="760" width="8" height="119"/><rect x="889" y="782" width="7" height="97"/><rect x="929" y="808" width="7" height="71"/><rect x="968" y="809" width="8" height="70"/><rect x="1008" y="818" width="8" height="61"/><rect x="1048" y="834" width="7" height="45"/><rect x="1087" y="842" width="8" height="37"/><rect x="1127" y="854" width="8" height="25"/></g>
              <path d="M763 879.500h398" stroke="#d9d9d9"/>
              <g font-size="6.800" fill="#595959" text-anchor="middle" dominant-baseline="central">
                <text x="773" y="730.700">314.18</text><text x="813" y="744.700">283.97</text><text x="853" y="751.700">267.86</text><text x="892.300" y="774.700">217.51</text><text x="932.300" y="800.700">159.11</text><text x="972" y="801.700">157.09</text><text x="1011.700" y="810.700">136.95</text><text x="1051.700" y="825.700">102.71</text><text x="1091" y="833.700">84.59</text><text x="1131" y="845.700">58.41</text>
                <text x="783" y="888.700">Los Angeles</text><text x="823" y="888.700">New York</text><text x="823" y="897.700">City</text><text x="862.700" y="888.700" textLength="40">San Francisco</text><text x="902.300" y="888.700">Philadelphia</text><text x="942" y="888.700">Houston</text><text x="982" y="888.700">Seattle</text><text x="1021.700" y="888.700">Chicago</text><text x="1061" y="888.700">Columbus</text><text x="1101" y="888.700">San Diego</text><text x="1140.700" y="888.700">Springfield</text>
                <text x="962" y="909.300" font-size="7.500">[orders].[City]</text>
                <text x="869" y="930.700">Sum of Year</text><text x="935" y="930.700">Count of Customer ID</text><text x="1012" y="930.700">Count of Product ID</text>
              </g>
              <rect x="846" y="928.700" width="4" height="4" fill="#4f81bd"/><rect x="898" y="928.700" width="4" height="4" fill="#c0504d"/><rect x="978" y="928.700" width="4" height="4" fill="#9bbb59"/>
            </svg>

            <!-- KPI shapes -->
            <div class="absolute left-[91px] top-[29px] w-[125px] h-[32px] bg-white border-[2.500px] border-[#0070c0] rounded-[7px] shadow-[1px_2px_3px_rgba(0,0,0,0.3)] flex items-center justify-center text-[9px] font-bold text-[#0b3fd0]">Sales Dashboard 2014</div>
            <div class="absolute left-[5.500px] top-[72px] w-[125px] h-[49px] bg-white border-[2.500px] border-[#0070c0] rounded-[8px] shadow-[1px_2px_3px_rgba(0,0,0,0.3)] flex items-start pt-[8px] pl-[6px]">
              <span class="w-[60px] text-[7.500px] leading-[14px] font-bold text-black">Total Sales</span><span class="-mt-px text-[10px] leading-[14px] font-bold text-[#0b3fd0]">484,247</span>
            </div>
            <div class="absolute left-[170.500px] top-[70px] w-[124px] h-[46px] bg-white border-[2.500px] border-[#0070c0] rounded-[8px] shadow-[1px_2px_3px_rgba(0,0,0,0.3)] flex items-start pt-[10px] pl-[6px]">
              <span class="w-[60px] text-[7.500px] leading-[14px] font-bold text-black">Net Sales</span><span class="mt-[5px] text-[10px] leading-[14px] font-bold text-[#0b3fd0]">455,028</span>
            </div>

            <!-- slicer Year -->
            <div class="absolute left-[665.500px] top-[21px] w-[201px] h-[48px] bg-white border-[1.500px] border-[#4f81bd] px-[3.500px] flex flex-col">
              <div class="h-[16px] flex items-center text-[12.500px] font-bold text-black"><span>Year</span>
                <svg class="ml-auto w-[11px] h-[11px]" viewBox="0 0 11 11" fill="none" stroke="#8a8a8a"><path d="M4 1.500h7M4 5.500h7M4 9.500h7M.5 1.500l1 1 1-2M.5 5.500l1 1 1-2M.5 9.500l1 1 1-2"/></svg>
                <svg class="ml-[8px] mr-[1px] w-[11px] h-[11px]" viewBox="0 0 11 11" fill="none"><path d="M.5.500h8L5.500 4.500v5l-2-1v-4z" stroke="#666" fill="#999"/><path d="M7 7l3.500 3.500M10.500 7L7 10.500" stroke="#d9250d"/></svg>
              </div>
              <div class="h-[1.500px] bg-[#4f81bd]"></div>
              <div class="mt-[1.500px] flex gap-[2.500px] text-[11px]">
                <div class="w-[45.500px] h-[16px] bg-[#b8cce4] border border-[#8f8f8f] rounded-[3px] pl-[5px] leading-[14px]">2014</div>
                <div class="w-[45.500px] h-[16px] bg-white border border-[#d4d4d4] rounded-[3px] pl-[5px] leading-[14px]">2015</div>
                <div class="w-[45.500px] h-[16px] bg-white border border-[#d4d4d4] rounded-[3px] pl-[5px] leading-[14px]">2016</div>
                <div class="w-[45.500px] h-[16px] bg-white border border-[#d4d4d4] rounded-[3px] pl-[5px] leading-[14px]">2017</div>
              </div>
            </div>
            <!-- slicer Segment -->
            <div class="absolute left-[662.500px] top-[87px] w-[201.500px] h-[48px] bg-white border-[1.500px] border-[#4f81bd] px-[3.500px] flex flex-col">
              <div class="h-[16px] flex items-center text-[12.500px] font-bold text-black"><span>Segment</span>
                <svg class="ml-auto w-[11px] h-[11px]" viewBox="0 0 11 11" fill="none" stroke="#9a9a9a"><path d="M4 1.500h7M4 5.500h7M4 9.500h7M.5 1.500l1 1 1-2M.5 5.500l1 1 1-2M.5 9.500l1 1 1-2"/></svg>
                <svg class="ml-[8px] mr-[1px] w-[11px] h-[11px]" viewBox="0 0 11 11" fill="none" stroke="#d0d0d0"><path d="M.5.500h8L5.500 4.500v5l-2-1v-4z" fill="#e6e6e6"/><path d="M7 7l3.500 3.500M10.500 7L7 10.500"/></svg>
              </div>
              <div class="h-[1.500px] bg-[#4f81bd]"></div>
              <div class="mt-[1.500px] flex gap-[3px] text-[11px]">
                <div class="w-[61px] h-[16px] bg-[#b8cce4] border border-[#8f8f8f] rounded-[3px] pl-[5px] leading-[14px]">Consumer</div>
                <div class="w-[61px] h-[16px] bg-[#b8cce4] border border-[#8f8f8f] rounded-[3px] pl-[5px] leading-[14px]">Corporate</div>
                <div class="w-[61px] h-[16px] bg-[#b8cce4] border border-[#8f8f8f] rounded-[3px] pl-[5px] leading-[14px] whitespace-nowrap">Home Of...</div>
              </div>
            </div>
            <!-- slicer Region -->
            <div class="absolute left-[663.400px] top-[151px] w-[200.600px] h-[52.700px] bg-white border-[1.500px] border-[#4f81bd] px-[3.500px] flex flex-col">
              <div class="h-[16.500px] flex items-center text-[12.500px] font-bold text-black"><span>Region</span>
                <svg class="ml-auto w-[11px] h-[11px]" viewBox="0 0 11 11" fill="none" stroke="#9a9a9a"><path d="M4 1.500h7M4 5.500h7M4 9.500h7M.5 1.500l1 1 1-2M.5 5.500l1 1 1-2M.5 9.500l1 1 1-2"/></svg>
                <svg class="ml-[8px] mr-[1px] w-[11px] h-[11px]" viewBox="0 0 11 11" fill="none" stroke="#d0d0d0"><path d="M.5.500h8L5.500 4.500v5l-2-1v-4z" fill="#e6e6e6"/><path d="M7 7l3.500 3.500M10.500 7L7 10.500"/></svg>
              </div>
              <div class="h-[1.500px] bg-[#4f81bd]"></div>
              <div class="mt-[1.500px] flex gap-[2.500px] text-[11px]">
                <div class="w-[45.500px] h-[16px] bg-[#b8cce4] border border-[#8f8f8f] rounded-[3px] pl-[5px] leading-[14px]">Central</div>
                <div class="w-[45.500px] h-[16px] bg-[#b8cce4] border border-[#8f8f8f] rounded-[3px] pl-[5px] leading-[14px]">East</div>
                <div class="w-[45.500px] h-[16px] bg-[#b8cce4] border border-[#8f8f8f] rounded-[3px] pl-[5px] leading-[14px]">South</div>
                <div class="w-[45.500px] h-[16px] bg-[#b8cce4] border border-[#8f8f8f] rounded-[3px] pl-[5px] leading-[14px]">West</div>
              </div>
            </div>
            <!-- slicer Category -->
            <div class="absolute left-[951.500px] top-[21px] w-[286px] h-[47px] bg-white border-[1.500px] border-[#4f81bd] px-[3.500px] flex flex-col">
              <div class="h-[16px] flex items-center text-[12.500px] font-bold text-black"><span>Category</span>
                <svg class="ml-auto w-[11px] h-[11px]" viewBox="0 0 11 11" fill="none" stroke="#9a9a9a"><path d="M4 1.500h7M4 5.500h7M4 9.500h7M.5 1.500l1 1 1-2M.5 5.500l1 1 1-2M.5 9.500l1 1 1-2"/></svg>
                <svg class="ml-[8px] mr-[1px] w-[11px] h-[11px]" viewBox="0 0 11 11" fill="none" stroke="#d0d0d0"><path d="M.5.500h8L5.500 4.500v5l-2-1v-4z" fill="#e6e6e6"/><path d="M7 7l3.500 3.500M10.500 7L7 10.500"/></svg>
              </div>
              <div class="h-[1.500px] bg-[#4f81bd]"></div>
              <div class="mt-[1.500px] flex gap-[3px] text-[11px]">
                <div class="w-[89.500px] h-[16px] bg-[#b8cce4] border border-[#8f8f8f] rounded-[3px] pl-[5px] leading-[14px]">Furniture</div>
                <div class="w-[89.500px] h-[16px] bg-[#b8cce4] border border-[#8f8f8f] rounded-[3px] pl-[5px] leading-[14px]">Office Supplies</div>
                <div class="w-[89.500px] h-[16px] bg-[#b8cce4] border border-[#8f8f8f] rounded-[3px] pl-[5px] leading-[14px]">Technology</div>
              </div>
            </div>
            <!-- selected cell -->
            <div class="absolute left-[901.500px] top-[90px] w-[45px] h-[15px] border-[2px] border-[#217346]"><span class="absolute -right-[3px] -bottom-[3px] w-[5px] h-[5px] bg-[#217346] border border-white box-content -m-px"></span></div>
          </div>
        </div>
      </div>
      <!-- vertical scrollbar -->
      <div class="w-[21px] flex flex-col items-center">
        <svg class="mt-[3px] ml-[1px] w-[9px] h-[7px]" viewBox="0 0 9 7"><path d="M4.500 0l4.500 7H0z" fill="#606060"/></svg>
        <div class="mt-[7px] ml-[1px] w-[9px] h-[692px] bg-[#707070] rounded-[5px]"></div>
        <svg class="mt-[18px] ml-[1px] w-[9px] h-[7px]" viewBox="0 0 9 7"><path d="M4.500 7L9 0H0z" fill="#606060"/></svg>
      </div>
    </div>

    <!-- sheet tabs -->
    <div class="h-[31px] flex items-start relative text-[13px]">
      <div class="h-[27px] flex items-center">
        <svg class="ml-[28px] w-[8px] h-[12px]" viewBox="0 0 8 12" fill="none" stroke="#444"><path d="M6.500 1l-5 5 5 5"/></svg>
        <svg class="ml-[24px] w-[8px] h-[12px]" viewBox="0 0 8 12" fill="none" stroke="#a6a6a6"><path d="M1.500 1l5 5-5 5"/></svg>
        <span class="ml-[21px] w-[12px] h-[3px] flex gap-[2px]"><span class="w-[3px] h-[3px] bg-[#444]"></span><span class="w-[3px] h-[3px] bg-[#444]"></span><span class="w-[3px] h-[3px] bg-[#444]"></span></span>
      </div>
      <div class="ml-[15px] w-[87px] h-[27px] bg-white rounded-b-[4px] shadow-[0_1px_2px_rgba(0,0,0,0.2)] relative flex justify-center pt-[2px] font-medium text-[13.500px] leading-[20px] z-10">Dashboard<span class="absolute left-[8px] right-[9px] bottom-[3px] h-[2px] bg-[#107c41]"></span></div>
      <span class="ml-[3px] mt-[6px] w-px h-[18px] bg-[#d0d0d0]"></span>
      <div class="w-[67px] h-[31px] text-center leading-[30px]">Orders</div>
      <span class="mt-[6px] w-px h-[18px] bg-[#d0d0d0]"></span>
      <div class="w-[73px] h-[31px] text-center leading-[30px]">Returns</div>
      <span class="mt-[6px] w-px h-[18px] bg-[#d0d0d0]"></span>
      <div class="w-[68px] h-[31px] text-center leading-[30px]">People</div>
      <span class="mt-[6px] w-px h-[18px] bg-[#d0d0d0]"></span>
      <svg class="ml-[42px] mt-[8px] w-[12px] h-[12px]" viewBox="0 0 12 12" stroke="#444"><path d="M6 0v12M0 6h12"/></svg>
      <div class="ml-[355px] mt-[7px] h-[14px] flex flex-col justify-between w-[2px]"><span class="w-[2px] h-[2px] bg-[#333]"></span><span class="w-[2px] h-[2px] bg-[#333]"></span><span class="w-[2px] h-[2px] bg-[#333]"></span></div>
      <div class="ml-[17px] mt-[6px] w-[782px] h-[17px] bg-[#f6f6f6] rounded-[8px] flex items-center">
        <svg class="ml-[4px] w-[6px] h-[9px]" viewBox="0 0 6 9"><path d="M0 4.500L6 0v9z" fill="#606060"/></svg>
        <span class="ml-[6px] w-[729px] h-[9px] bg-[#707070] rounded-[5px]"></span>
        <svg class="ml-[26px] w-[6px] h-[9px]" viewBox="0 0 6 9"><path d="M6 4.500L0 0v9z" fill="#606060"/></svg>
      </div>
    </div>
  </div>
</div>

<!-- status bar -->
<div class="h-[22px] bg-[#f3f3f3] flex items-center text-[11.300px] text-[#333] shrink-0">
  <span class="ml-[10px] w-[51px]">Ready</span>
  <svg class="ml-[1px] w-[15px] h-[15px]" viewBox="0 0 15 15" fill="none" stroke="#444"><circle cx="7.500" cy="2.500" r="1.800"/><path d="M1 5.500h13M5 5.500v3L3 14M10 5.500v3l2 5.500M5 9l7 5M10 9l-7 5"/></svg>
  <span class="ml-[4px] font-medium whitespace-nowrap">Accessibility: Investigate</span>
  <div class="ml-auto h-[22px] flex items-center w-[294px]">
    <div class="w-[40px] h-[22px] bg-[#dedede] flex items-center justify-center"><svg class="w-[14px] h-[14px]" viewBox="0 0 14 14" fill="none" stroke="#333"><rect x=".5" y=".5" width="13" height="13"/><path d="M5 0v14M9 0v14M0 5h14M0 9h14"/></svg></div>
    <svg class="ml-[13px] w-[13px] h-[14px]" viewBox="0 0 13 14" fill="none" stroke="#333"><rect x=".5" y=".5" width="12" height="13"/><rect x="3" y="3" width="7" height="8"/><path d="M3 5h7M3 7h7M3 9h7"/></svg>
    <svg class="ml-[27px] w-[13px] h-[14px]" viewBox="0 0 13 14" fill="none" stroke="#333"><rect x=".5" y=".5" width="12" height="13"/><path d="M4 .5v6h5v-6M0 9.500h13"/></svg>
    <span class="ml-[21px] w-[6px] h-px bg-[#333]"></span>
    <div class="ml-[6px] w-[100px] h-[15px] relative flex items-center"><span class="w-full h-px bg-[#555]"></span><span class="absolute left-[50px] top-[5px] w-px h-[5px] bg-[#555]"></span><span class="absolute left-[27px] top-[1px] w-[4px] h-[13px] bg-[#555] rounded-[1px]"></span></div>
    <svg class="ml-[5px] w-[8px] h-[8px]" viewBox="0 0 8 8" stroke="#333"><path d="M4 0v8M0 4h8"/></svg>
    <span class="ml-[13px] text-[10.500px]">60%</span>
  </div>
</div>

<!-- taskbar -->
<div class="h-[40px] bg-[#2b2b2b] flex items-stretch text-white shrink-0">
  <div class="w-[48px] bg-[#1f1f1f] flex items-center justify-center"><svg class="w-[17px] h-[17px]" viewBox="0 0 17 17" fill="#fff"><path d="M0 2.400l7-1v6.600H0zM8 1.200L17 0v8H8zM0 9h7v6.600l-7-1zM8 9h9v8l-9-1.200z"/></svg></div>
  <div class="w-[288px] bg-[#f3f3f3] border-y border-[#c8c8c8] flex items-center pl-[14px] text-[#1f1f1f] text-[15px]">
    <svg class="w-[14px] h-[16px]" viewBox="0 0 14 16" fill="none" stroke="#222" stroke-width="1.100"><circle cx="8.500" cy="5.500" r="4.500"/><path d="M5.200 9L1 15"/></svg>
    <span class="ml-[10px] whitespace-nowrap">Type here to search</span>
    <svg class="ml-auto mr-[8px] w-[62px] h-[32px]" viewBox="0 0 62 32"><path d="M25 2c1.500 7 4 9.500 11 11-7 1.500-9.500 4-11 12-1.500-8-4-10.500-11-12 7-1.500 9.500-4 11-11z" fill="#f9c400" stroke="#f5a100" stroke-width=".7"/><path d="M47.500 12c.7 3 1.700 4 5 5-3.300 1-4.300 2-5 5-.7-3-1.700-4-5-5 3.300-1 4.300-2 5-5z" fill="#f9c400"/><path d="M6 18c.5 2.500 1.200 3.200 4 4-2.800.8-3.500 1.500-4 4-.5-2.500-1.200-3.200-4-4 2.800-.8 3.500-1.500 4-4z" fill="#3ca7ea"/><rect x="40.500" y="6.500" width="4" height="4" fill="#ef6c4a"/><circle cx="60" cy="23" r="2" fill="#8fb63a"/></svg>
  </div>
  <div class="w-[51px] pr-[2px] flex items-center justify-center"><svg class="w-[16px] h-[16px]" viewBox="0 0 16 16" fill="none" stroke="#fff"><path d="M1 3.500h10v9H1M1 .5h10M1 15.500h10M11 .5v3M11 12.500v3M1 .5v3M1 12.500v3"/><path d="M14.500 1v4M14.500 11v4"/><rect x="13" y="6" width="3" height="3" fill="#fff" stroke="none"/></svg></div>
  <div class="w-[49px] flex items-center justify-center"><svg class="w-[23px] h-[23px]" viewBox="0 0 23 23"><path d="M8 1h6c-3 3-4 8-4 12s-1 6-5 7c-3 0-5-3-4-7 1-5 3-12 7-12z" fill="#38a6d8"/><path d="M2 11c2-2 5-3 8-3l-1 5c-1 4-2 6-4 7-3 0-4-5-3-9z" fill="#7ec24a"/><path d="M15 22H9c3-3 4-8 4-12s1-6 5-7c3 0 5 3 4 7-1 5-3 12-7 12z" fill="#d062b0"/><path d="M21 12c-2 2-5 3-8 3 0 3-1 5-2 7h4c3 0 5-5 6-10z" fill="#f2795a"/></svg></div>
  <div class="w-[49px] flex items-center justify-center"><svg class="w-[23px] h-[24px]" viewBox="0 0 23 24"><path d="M7 7V3a2 2 0 0 1 2-2h5a2 2 0 0 1 2 2v4" fill="none" stroke="#3fa3dc" stroke-width="1.800"/><path d="M1 6h21v15a2 2 0 0 1-2 2H3a2 2 0 0 1-2-2z" fill="#f4f4f4"/><rect x="7" y="9" width="4" height="4" fill="#e25b3a"/><rect x="12" y="9" width="4" height="4" fill="#8fb63a"/><rect x="7" y="14" width="4" height="4" fill="#2b9fe0"/><rect x="12" y="14" width="4" height="4" fill="#f9c400"/></svg></div>
  <div class="w-[49px] flex items-center justify-center"><svg class="w-[24px] h-[23px]" viewBox="0 0 24 23"><path d="M7 3l9-3 7 5v12l-7 5H7z" fill="#1490df"/><path d="M15 9h9v9l-8 4H7z" fill="#28a8ea"/><rect y="6" width="13" height="13" rx="1" fill="#0a5ea8"/><text x="6.500" y="16.500" text-anchor="middle" font-size="11" font-weight="700" fill="#fff">O</text></svg></div>
  <div class="w-[49px] flex items-center justify-center"><svg class="w-[24px] h-[25px]" viewBox="0 0 24 25"><circle cx="12" cy="14" r="11" fill="#e8573f"/><path d="M13 0c6 3 11 8 11 14 0 1-1 2-2 0-1-5-5-7-8-9z" fill="#ffb52e"/><path d="M2 7c2 0 3 1 3 1 2-2 5-3 8-2-3 1-5 3-4 6l-6 2z" fill="#ff9a2e"/><circle cx="12" cy="14" r="5.500" fill="#7b45c9"/><path d="M8 12c3-3 8-2 9 1-2-1-6-1-9-1z" fill="#e8573f"/></svg></div>
  <div class="w-[50px] flex items-center justify-center relative"><svg class="w-[23px] h-[22px]" viewBox="0 0 23 23"><path d="M8 1h6c-3 3-4 8-4 12s-1 6-5 7c-3 0-5-3-4-7 1-5 3-12 7-12z" fill="#38a6d8"/><path d="M2 11c2-2 5-3 8-3l-1 5c-1 4-2 6-4 7-3 0-4-5-3-9z" fill="#7ec24a"/><path d="M15 22H9c3-3 4-8 4-12s1-6 5-7c3 0 5 3 4 7-1 5-3 12-7 12z" fill="#d062b0"/></svg><span class="absolute left-[16px] bottom-[6px] bg-black text-white text-[6px] leading-[7px] px-px font-bold">M365</span></div>
  <div class="w-[48px] flex items-center justify-center relative"><svg class="w-[22px] h-[21px]" viewBox="0 0 22 21"><path d="M0 3a1 1 0 0 1 1-1h7l2 3h11a1 1 0 0 1 1 1v13a1 1 0 0 1-1 1H1a1 1 0 0 1-1-1z" fill="#fcc94a"/><path d="M0 7h22" stroke="#e8a91e"/><path d="M6 20v-7a1 1 0 0 1 1-1h8a1 1 0 0 1 1 1v7h-3v-4H9v4z" fill="#2b7cd3"/></svg><span class="absolute left-[3px] right-[5px] bottom-0 h-[2px] bg-[#76b9ed]"></span></div>
  <div class="w-[49px] flex items-center justify-center relative"><svg class="w-[24px] h-[24px]" viewBox="0 0 24 24"><path d="M12 0c7 0 12 5 12 11 0 3-3 5-6 5s-5-1-5-3c0-3 4-2 4-5 0-3-3-6-8-6C4 2 0 6 0 11 0 5 5 0 12 0z" fill="#2ec4a5"/><path d="M0 11c0-5 4-9 9-9 3 0 7 3 7 6s-4 2-4 5c0 4 5 6 9 5-2 3-5 6-10 6C5 24 0 18 0 11z" fill="#1683d8"/></svg><span class="absolute left-[4px] right-[5px] bottom-0 h-[2px] bg-[#76b9ed]"></span></div>
  <div class="w-[48px] bg-[#4d4d4d] flex items-center justify-center relative"><svg class="w-[24px] h-[24px]" viewBox="0 0 24 24"><rect x="6" y="1" width="18" height="22" rx="1" fill="#21a366"/><rect x="15" y="1" width="9" height="11" fill="#33c481"/><rect x="6" y="12" width="9" height="11" fill="#107c41"/><rect x="15" y="12" width="9" height="11" fill="#185c37"/><rect y="6" width="13" height="13" rx="1" fill="#107c41"/><text x="6.500" y="16.500" text-anchor="middle" font-size="11" font-weight="700" fill="#fff">X</text></svg><span class="absolute inset-x-0 bottom-0 h-[2px] bg-[#76b9ed]"></span></div>

  <!-- tray -->
  <div class="ml-auto w-[389px] flex items-center">
    <svg class="w-[24px] h-[30px]" viewBox="0 0 24 30"><path d="M0 17a12 13 0 0 1 24 0v1H0z" fill="#f9a825"/><path d="M0 19h24v1.500H0z" fill="#8a6d1e"/><path d="M12 28l-4-5h8z" fill="#3ca7ea"/></svg>
    <span class="ml-[8px] w-[41px] text-center font-['DejaVu_Sans',sans-serif] text-[13.500px]" dir="rtl" lang="ar">الغروب</span>
    <svg class="ml-[25.500px] w-[11px] h-[7px]" viewBox="0 0 11 7" fill="none" stroke="#fff"><path d="M.5 6.500l5-5 5 5"/></svg>
    <svg class="ml-[13.500px] w-[10px] h-[18px]" viewBox="0 0 10 18" fill="none" stroke="#fff"><rect x=".5" y="4.500" width="9" height="9" rx="2"/><path d="M2 1h6M2 17h6M5 1v3"/></svg>
    <svg class="ml-[10.500px] w-[17px] h-[13px]" viewBox="0 0 17 13"><path d="M4 13a4 4 0 0 1-.5-8A5.500 5.500 0 0 1 13.800 5 4 4 0 0 1 13 13z" fill="#1f8fe0"/></svg>
    <svg class="ml-[7px] w-[17px] h-[13px]" viewBox="0 0 17 13"><path d="M4 13a4 4 0 0 1-.5-8A5.500 5.500 0 0 1 13.800 5 4 4 0 0 1 13 13z" fill="#e0e0e0"/></svg>
    <svg class="ml-[6px] w-[17px] h-[18px]" viewBox="0 0 17 18" fill="none" stroke="#fff"><rect x="4.500" y=".5" width="12" height="11"/><rect x=".5" y="3.500" width="5" height="5" fill="#2b2b2b"/><path d="M8 11.500v3M4 17h10M8 14.500v2.500"/></svg>
    <svg class="ml-[8px] w-[17px] h-[16px]" viewBox="0 0 17 16" fill="none" stroke="#fff"><path d="M1 5.500h3L8 1v14l-4-4.500H1zM10.500 5c1.500 2 1.500 4 0 6M12.500 3c2.500 3 2.500 7 0 10M14.500 1.500c3 4 3 9 0 13"/></svg>
    <span class="ml-[16px] w-[12px] text-center font-['DejaVu_Sans',sans-serif] text-[13px]" lang="ar">ع</span>
    <div class="ml-[11px] w-[64px] flex flex-col items-center text-[11.500px] leading-[18px] whitespace-nowrap"><span>6:16 PM</span><span>9/29/2025</span></div>
    <div class="w-[42px] h-[40px] bg-[#3a3a3a] flex items-center justify-center"><svg class="w-[16px] h-[18px]" viewBox="0 0 16 18" fill="none" stroke="#fff"><path d="M.5.500h15v13h-5l-2.500 3-2.500-3h-5z"/></svg></div>
  </div>
</div>

<!-- top progress stripe -->
<div class="absolute left-[840px] top-0 w-[48px] h-px bg-[#2b7cd3]"></div>
<div class="absolute left-[888px] top-0 w-[193px] h-px bg-[#d6d6d6]"></div>

<!-- watermark -->
<div class="absolute left-[845px] top-[940px] w-[230px] h-[86px] flex items-center justify-center font-['DejaVu_Sans',sans-serif] font-bold text-[66px] leading-[86px] text-[rgba(187,187,187,0.4)] pointer-events-none" lang="ar">مستقل</div>
<div class="absolute left-[845px] top-[1018px] w-[230px] h-[40px] flex items-center justify-center font-['Liberation_Sans',sans-serif] font-bold text-[37px] leading-[40px] text-[rgba(187,187,187,0.4)] pointer-events-none">mostaql.com</div>
</div>
</body>
</html>
